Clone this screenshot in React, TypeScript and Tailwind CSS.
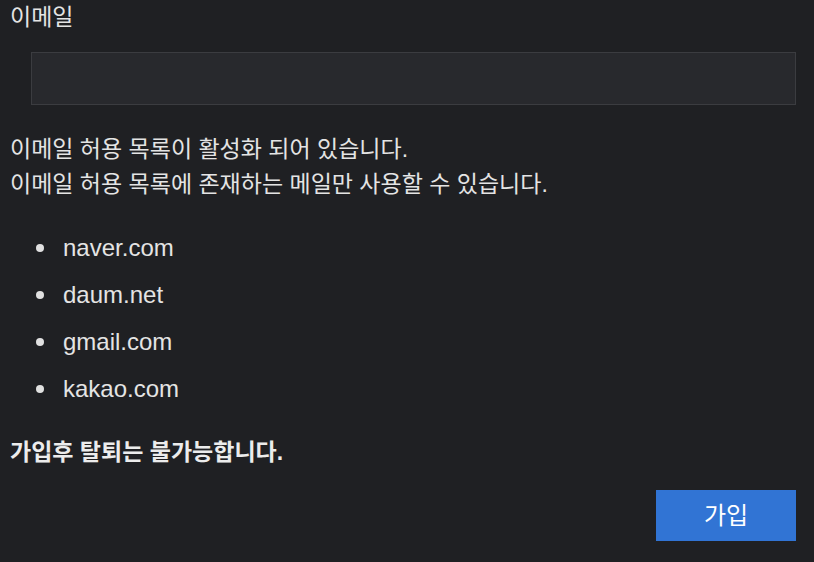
const domains = ["naver.com", "daum.net", "gmail.com", "kakao.com"];

export default function App() {
  return (
    <div
      className="min-h-[562px] w-full bg-[#1f2023] pl-[10px] pr-[18px] pt-[2px] text-[#e4e4e4]"
      style={{ fontFamily: '"Liberation Sans", "Noto Sans CJK KR", sans-serif' }}
    >
      <label className="block text-[23px] leading-[30px]">이메일</label>
      <input
        type="text"
        className="mt-[20px] ml-[21px] block h-[53px] w-[765px] border border-[#3b3c40] bg-[#28292d] px-3 text-[18px] text-[#e4e4e4] outline-none"
      />

      <div className="mt-[27px] text-[23px] leading-[35px]">
        <p>이메일 허용 목록이 활성화 되어 있습니다.</p>
        <p>이메일 허용 목록에 존재하는 메일만 사용할 수 있습니다.</p>
      </div>

      <ul className="mt-[22px]">
        {domains.map((d) => (
          <li key={d} className="flex items-center h-[47px] text-[24px]">
            <span className="ml-[26px] h-[8px] w-[8px] rounded-full bg-[#e0e0e0]" />
            <span className="ml-[19px]">{d}</span>
          </li>
        ))}
      </ul>

      <p className="mt-[25px] text-[23px] font-bold leading-[30px] text-[#ececec]">
        가입후 탈퇴는 불가능합니다.
      </p>

      <div className="mt-[23px] flex justify-end">
        <button className="h-[51px] w-[140px] bg-[#3174d4] text-[24px] text-white">
          가입
        </button>
      </div>
    </div>
  );
}
